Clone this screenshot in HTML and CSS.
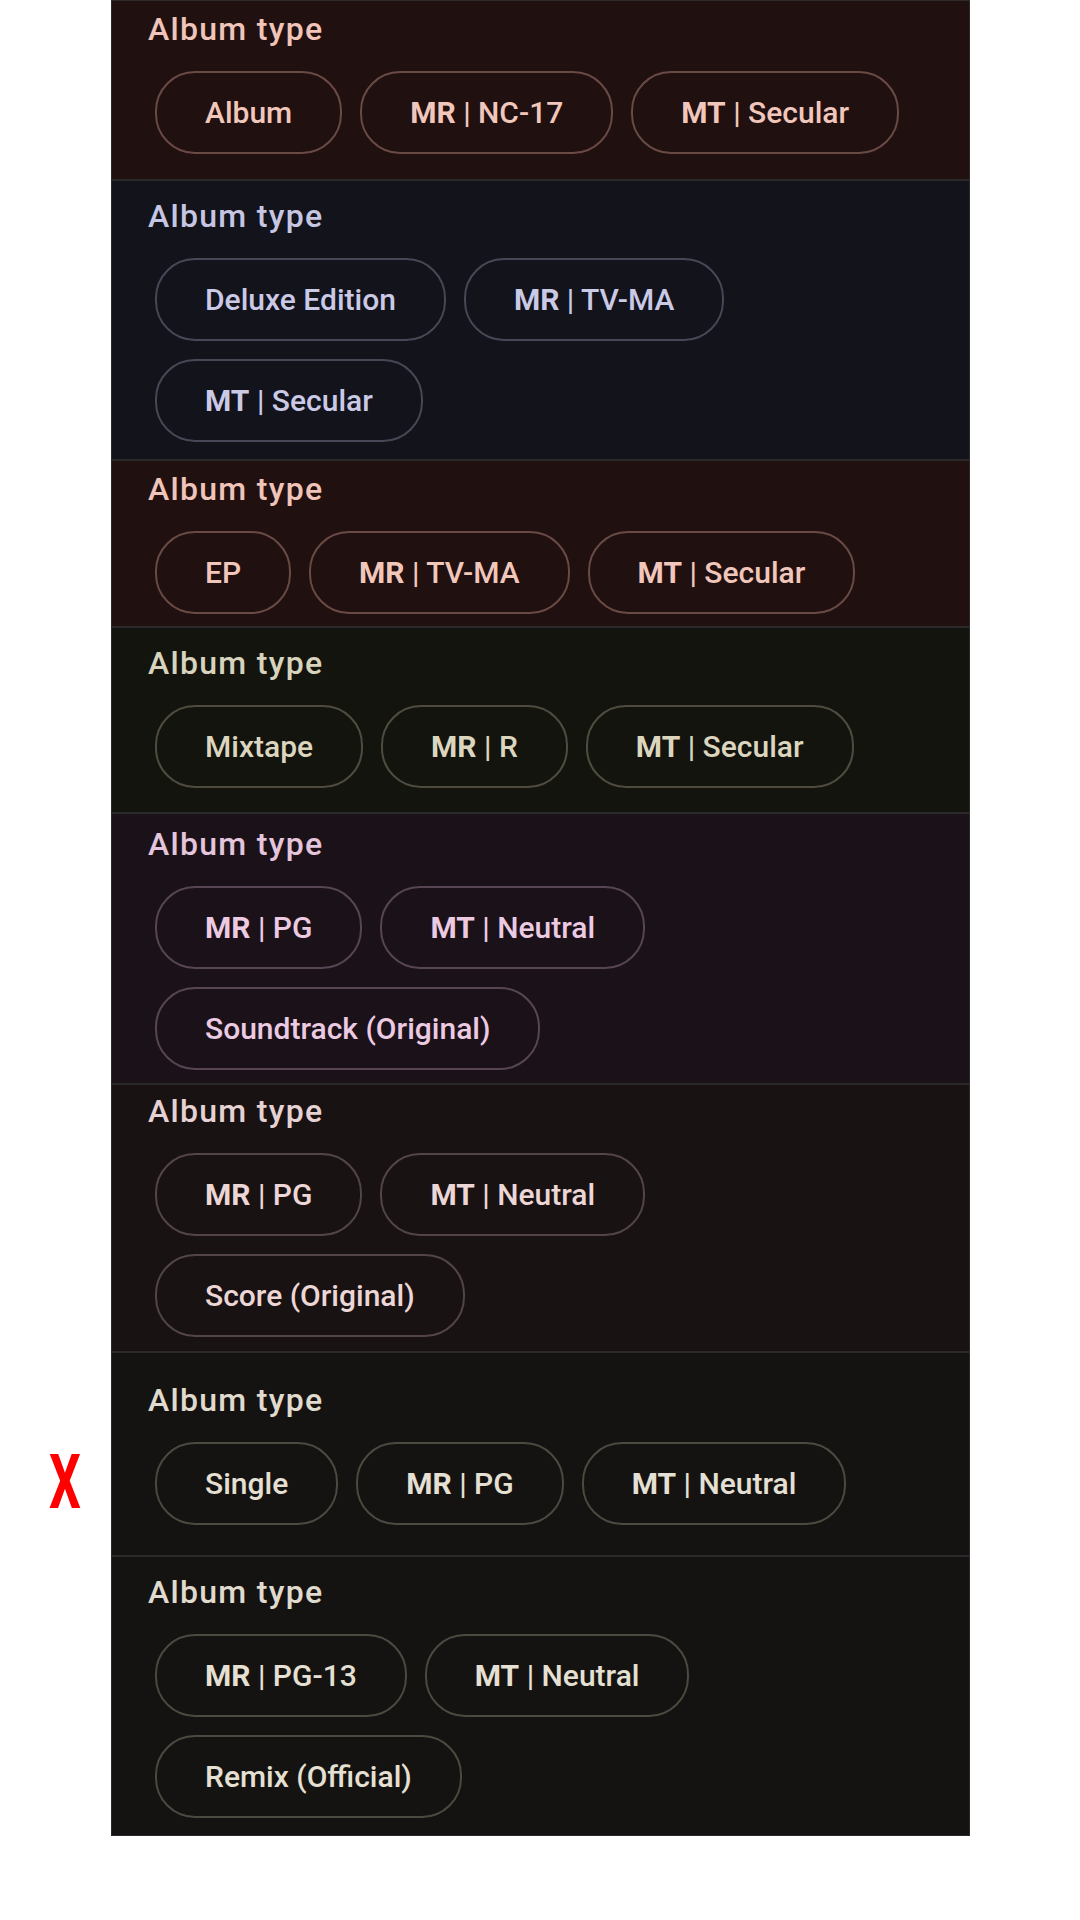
FILE: index.html
```html
<!DOCTYPE html>
<html lang="en">
<head>
    <meta charset="UTF-8">
    <meta name="viewport" content="width=device-width, initial-scale=1.0">
    <title>Album type</title>
    <link rel="stylesheet" href="styles.css">
</head>
<body>
    <div class="list">
        <section class="group theme-rose space-a">
            <h2 class="group-title">Album type</h2>
            <div class="chips">
                <span class="chip">Album</span>
                <span class="chip"><b>MR</b> | NC-17</span>
                <span class="chip"><b>MT</b> | Secular</span>
            </div>
        </section>

        <section class="group theme-navy space-b">
            <h2 class="group-title">Album type</h2>
            <div class="chips">
                <span class="chip">Deluxe Edition</span>
                <span class="chip"><b>MR</b> | TV-MA</span>
                <span class="chip"><b>MT</b> | Secular</span>
            </div>
        </section>

        <section class="group theme-rose space-c">
            <h2 class="group-title">Album type</h2>
            <div class="chips">
                <span class="chip">EP</span>
                <span class="chip"><b>MR</b> | TV-MA</span>
                <span class="chip"><b>MT</b> | Secular</span>
            </div>
        </section>

        <section class="group theme-olive space-d">
            <h2 class="group-title">Album type</h2>
            <div class="chips">
                <span class="chip">Mixtape</span>
                <span class="chip"><b>MR</b> | R</span>
                <span class="chip"><b>MT</b> | Secular</span>
            </div>
        </section>

        <section class="group theme-plum space-e">
            <h2 class="group-title">Album type</h2>
            <div class="chips">
                <span class="chip"><b>MR</b> | PG</span>
                <span class="chip"><b>MT</b> | Neutral</span>
                <span class="chip">Soundtrack (Original)</span>
            </div>
        </section>

        <section class="group theme-blush space-f">
            <h2 class="group-title">Album type</h2>
            <div class="chips">
                <span class="chip"><b>MR</b> | PG</span>
                <span class="chip"><b>MT</b> | Neutral</span>
                <span class="chip">Score (Original)</span>
            </div>
        </section>

        <section class="group theme-sand space-g">
            <span class="mark">X</span>
            <h2 class="group-title">Album type</h2>
            <div class="chips">
                <span class="chip">Single</span>
                <span class="chip"><b>MR</b> | PG</span>
                <span class="chip"><b>MT</b> | Neutral</span>
            </div>
        </section>

        <section class="group theme-sand space-b">
            <h2 class="group-title">Album type</h2>
            <div class="chips">
                <span class="chip"><b>MR</b> | PG-13</span>
                <span class="chip"><b>MT</b> | Neutral</span>
                <span class="chip">Remix (Official)</span>
            </div>
        </section>
    </div>
</body>
</html>
```

FILE: styles.css
```css
body {
    margin: 0;
    background: #fff;
    font-family: Roboto, "Noto Sans", sans-serif;
}

.list {
    width: 859px;
    margin-left: 111px;
}

.group {
    position: relative;
    border: 1px solid #2b2929;
    padding-left: 36px;
    padding-right: 43px;
    background: var(--bg);
    color: var(--fg);
}

.group-title {
    margin: 0;
    font-size: 32px;
    font-weight: 500;
    line-height: 40px;
    letter-spacing: 1.3px;
    color: var(--title);
}

.chips {
    display: flex;
    flex-wrap: wrap;
    gap: 18px;
    margin-top: 22px;
    padding-left: 7px;
}

.chip {
    display: inline-flex;
    align-items: center;
    box-sizing: border-box;
    height: 83px;
    padding: 0 48px;
    border: 2px solid var(--line);
    border-radius: 40px;
    font-size: 30px;
    font-weight: 500;
    white-space: pre;
}

.chip b {
    font-weight: 700;
}

.mark {
    position: absolute;
    left: -63px;
    top: 91px;
    font-size: 76px;
    font-weight: 700;
    line-height: 76px;
    color: #ff0000;
    transform: scaleX(0.66);
    transform-origin: left center;
}

/* colour schemes */
.theme-rose {
    --bg: #201010;
    --fg: #f2c7bb;
    --title: #f0c4b8;
    --line: #6a4a44;
}

.theme-navy {
    --bg: #12131b;
    --fg: #cac9e6;
    --title: #c7c6e2;
    --line: #474756;
}

.theme-olive {
    --bg: #14140f;
    --fg: #dcd6bf;
    --title: #d8d3bd;
    --line: #4f4c3f;
}

.theme-plum {
    --bg: #1b1219;
    --fg: #eccae2;
    --title: #e4c5dc;
    --line: #574553;
}

.theme-blush {
    --bg: #191213;
    --fg: #ecd6d6;
    --title: #e6d2d2;
    --line: #534546;
}

.theme-sand {
    --bg: #151311;
    --fg: #e5e0d3;
    --title: #e0dbce;
    --line: #4c4940;
}

/* spacing per block */
.space-a { padding-top: 8px;  padding-bottom: 25px; }
.space-b { padding-top: 15px; padding-bottom: 17px; }
.space-c { padding-top: 8px;  padding-bottom: 12px; }
.space-d { padding-top: 15px; padding-bottom: 24px; }
.space-e { padding-top: 10px; padding-bottom: 13px; }
.space-f { padding-top: 6px;  padding-bottom: 14px; }
.space-g { padding-top: 27px; padding-bottom: 30px; }
```
